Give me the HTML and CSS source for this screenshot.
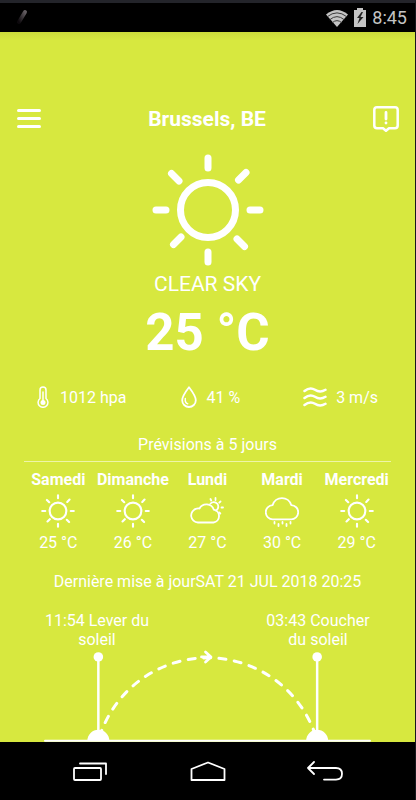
FILE: index.html
```
<!DOCTYPE html>
<html lang="fr">
<head>
    <meta charset="UTF-8">
    <meta name="viewport" content="width=device-width, initial-scale=1">
    <title>Brussels, BE</title>
    <link rel="stylesheet" href="styles.css">
</head>
<body>
    <svg class="symbols" aria-hidden="true">
        <symbol id="sun" viewBox="0 0 112 112">
            <circle cx="56" cy="56" r="27.5"/>
            <path d="M56 4v10M56 98v10M4 56h10M98 56h10M19.5 19.5l7.5 7.5M86.5 26l7.5-7.5M21.5 90.5l7.5-7.5M85 85l7.5 7.5"/>
        </symbol>
    </svg>

    <div class="phone">
        <div class="status-bar">
            <svg class="status-pen" width="14" height="18" viewBox="0 0 14 18">
                <defs>
                    <linearGradient id="fade" x1="1" y1="0" x2="0" y2="1">
                        <stop offset="0" stop-color="#625c60"/>
                        <stop offset="1" stop-color="#0c080c"/>
                    </linearGradient>
                </defs>
                <path d="M10 3L4 13" stroke="url(#fade)" stroke-width="4" stroke-linecap="round"/>
            </svg>
            <div class="status-icons">
                <svg width="22" height="18" viewBox="0 0 22 18">
                    <path d="M0 5.500Q11-3.500 22 5.500L11 18z" fill="#c4c4c4"/>
                    <path d="M1.500 7.500Q11 0 20.500 7.500M4 10.500Q11 4.500 18 10.500M6.500 13.500Q11 9.500 15.500 13.500" fill="none" stroke="#3a3a3a" stroke-width="1"/>
                </svg>
                <svg width="12" height="19" viewBox="0 0 12 19">
                    <path d="M3 0h6v2h3v17H0V2h3z" fill="#c4c4c4"/>
                    <path d="M7.500 4L3 10h2.500L3.500 16 9.500 9H6.500L9 4z" fill="#222"/>
                </svg>
                <span class="clock">8:45</span>
            </div>
        </div>

        <main class="weather">
            <header class="top">
                <button type="button" class="icon-btn" aria-label="Menu">
                    <svg width="24" height="20" viewBox="0 0 24 20">
                        <path d="M1.500 1.500h21M1.500 9.500h21M1.500 17.500h21" stroke-width="3"/>
                    </svg>
                </button>
                <h1>Brussels, BE</h1>
                <button type="button" class="icon-btn" aria-label="Alertes">
                    <svg width="26" height="26" viewBox="0 0 26 26">
                        <path d="M4 1.300h18q2.700 0 2.700 2.700v15.500q0 2.700-2.700 2.700h-6l-3 2.600-3-2.600H4q-2.700 0-2.700-2.700V4q0-2.700 2.700-2.700z" stroke-width="2.500"/>
                        <path d="M13 6.500v6.500M13 16.800v.2" stroke-width="2.800"/>
                    </svg>
                </button>
            </header>

            <section class="current">
                <svg class="sun-big" width="112" height="112"><use href="#sun"/></svg>
                <p class="sky">CLEAR SKY</p>
                <p class="temp">25 °C</p>
            </section>

            <ul class="details">
                <li>
                    <svg width="12" height="22" viewBox="0 0 12 22">
                        <path d="M3 12.500V4q0-3 3-3t3 3v8.500a4.900 4.900 0 1 1-6 0z" stroke-width="1.500"/>
                        <path d="M6 6v9" stroke-width="1.500"/>
                        <circle class="filled" cx="6" cy="16.400" r="2.500"/>
                    </svg>
                    1012 hpa
                </li>
                <li class="humidity">
                    <svg width="16" height="22" viewBox="0 0 16 22">
                        <path d="M8 1.200Q1.200 10 1.200 14.200a6.800 6.800 0 0 0 13.600 0Q14.800 10 8 1.200z" stroke-width="1.800"/>
                        <path d="M4.300 12.500q-.6 4.200 2.500 5.300" stroke-width="1.400"/>
                    </svg>
                    41 %
                </li>
                <li class="wind">
                    <svg width="24" height="20" viewBox="0 0 24 20">
                        <path d="M1.500 4q5.500-4.500 10.500-1.200t10.500 0M1.500 11q5.500-4.500 10.500-1.200t10.500 0M1.500 18q5.500-4.500 10.500-1.200t10.500 0" stroke-width="2.500"/>
                    </svg>
                    3 m/s
                </li>
            </ul>

            <section class="forecast">
                <h2>Prévisions à 5 jours</h2>
                <ol class="days">
                    <li>
                        <b>Samedi</b>
                        <svg class="day-icon" width="34" height="34"><use href="#sun"/></svg>
                        <span>25 °C</span>
                    </li>
                    <li>
                        <b>Dimanche</b>
                        <svg class="day-icon" width="34" height="34"><use href="#sun"/></svg>
                        <span>26 °C</span>
                    </li>
                    <li>
                        <b>Lundi</b>
                        <svg width="34" height="34" viewBox="0 0 34 34">
                            <path d="M8 28.500a7 7 0 0 1-1.500-13.800q1.500-.5 3-.2a7.800 7.800 0 0 1 14.300 1.200 6.500 6.500 0 0 1-.3 12.800z"/>
                            <path d="M20.500 9.500a4.500 4.500 0 1 1 5.500 7M25.500 4V6M30.500 7.500L29.300 8.700M31.500 13.500h1.500M29.300 18.500l1 1M20.500 5l.7 1.500"/>
                        </svg>
                        <span>27 °C</span>
                    </li>
                    <li>
                        <b>Mardi</b>
                        <svg width="34" height="34" viewBox="0 0 34 34">
                            <path d="M8 25.300a7.100 7.100 0 0 1-.3-14.200 9.600 9.600 0 0 1 18.500 0 7.100 7.100 0 0 1-.2 14.200z"/>
                            <path d="M9.500 28v1.500M13.500 30v2M17.500 28v1.500M21.500 30v2M25.500 28v1.500"/>
                        </svg>
                        <span>30 °C</span>
                    </li>
                    <li>
                        <b>Mercredi</b>
                        <svg class="day-icon" width="34" height="34"><use href="#sun"/></svg>
                        <span>29 °C</span>
                    </li>
                </ol>
                <p class="updated">Dernière mise à jourSAT 21 JUL 2018 20:25</p>
            </section>

            <section class="daylight">
                <div class="daylight-labels">
                    <p>11:54 Lever du soleil</p>
                    <p>03:43 Coucher du soleil</p>
                </div>
                <svg class="arc" viewBox="0 0 328 93">
                    <path d="M54.500 8v76M274 8v76" stroke-width="2.500"/>
                    <circle class="filled" cx="54.500" cy="8" r="4.800"/>
                    <circle class="filled" cx="274" cy="8" r="4.800"/>
                    <path d="M54.500 92a114 114 0 0 1 219.500 0" stroke-width="3" stroke-dasharray="7 8.500" stroke-dashoffset="-4"/>
                    <path d="M158 8h9M162 3l5.500 5-5.500 5" stroke-width="2.800"/>
                    <path class="filled" d="M43.500 92a11 11 0 0 1 22 0zM263 92a11 11 0 0 1 22 0z"/>
                    <path d="M1 92h326" stroke-width="2"/>
                </svg>
            </section>
        </main>

        <nav class="nav-bar">
            <button type="button" class="icon-btn" aria-label="Applications récentes">
                <svg width="36" height="22" viewBox="0 0 36 22">
                    <rect x="2" y="8" width="27" height="12" rx="1"/>
                    <path d="M8 3.500h26V14"/>
                </svg>
            </button>
            <button type="button" class="icon-btn" aria-label="Accueil">
                <svg width="36" height="22" viewBox="0 0 36 22">
                    <path d="M1.500 20V9L18 2.500 34.500 9v11z"/>
                </svg>
            </button>
            <button type="button" class="icon-btn" aria-label="Retour">
                <svg width="36" height="22" viewBox="0 0 36 22">
                    <path d="M7 2L1 8l6 6M1 8h28q6 0 6 5.800t-6 5.800H17"/>
                </svg>
            </button>
        </nav>
    </div>
</body>
</html>
```

FILE: styles.css
```
* {
    box-sizing: border-box;
    margin: 0;
    padding: 0;
}

body {
    background: #000;
    color: #fff;
    font-family: Roboto, sans-serif;
    font-size: 16px;
    line-height: 19px;
}

ul, ol {
    list-style: none;
}

svg {
    display: block;
    flex: none;
    fill: none;
    stroke: #fff;
    stroke-linecap: round;
    stroke-linejoin: round;
}

.symbols {
    position: absolute;
    width: 0;
    height: 0;
}

.filled {
    fill: #fff;
    stroke: none;
}

.icon-btn {
    border: none;
    background: none;
    color: inherit;
    cursor: pointer;
}

.phone {
    display: flex;
    flex-direction: column;
    min-height: 100vh;
    border-top: 3px solid #23242a;
    border-right: 1px solid #16171c;
}

/* status bar */
.status-bar {
    display: flex;
    justify-content: space-between;
    align-items: center;
    height: 29px;
    padding: 0 8px 0 15px;
}

.status-bar svg {
    stroke: none;
}

.status-icons {
    display: flex;
    align-items: center;
    gap: 6px;
}

.clock {
    color: #c4c4c4;
    font-size: 18px;
    line-height: 29px;
}

/* weather screen */
.weather {
    flex: 1;
    display: flex;
    flex-direction: column;
    padding-top: 72px;
    background: linear-gradient(#cddc3b, #d7e83f 8px);
}

.top {
    display: flex;
    justify-content: space-between;
    align-items: center;
    height: 30px;
    padding: 0 16px 0 17px;
}

.top h1 {
    font-size: 21px;
    line-height: 30px;
}

.current {
    display: flex;
    flex-direction: column;
    align-items: center;
    padding-top: 20px;
}

.sun-big {
    stroke-width: 7;
}

.sky {
    padding-top: 2px;
    font-size: 21px;
    line-height: 32px;
}

.temp {
    font-size: 51px;
    font-weight: bold;
    line-height: 66px;
}

.details {
    display: flex;
    justify-content: space-between;
    padding: 20px 37px 0;
}

.details li {
    display: flex;
    align-items: center;
    gap: 11px;
    height: 22px;
}

.details .humidity {
    gap: 9px;
    padding-right: 8px;
}

.details .wind {
    gap: 9px;
}

.forecast {
    padding-top: 24px;
    text-align: center;
}

.forecast h2 {
    margin: 0 24px;
    padding: 3px 0 7px;
    border-bottom: 1px solid #eef5a8;
    font-size: 16px;
    font-weight: normal;
}

.days {
    display: grid;
    grid-template-columns: repeat(5, 1fr);
    padding: 8px 21px 0;
}

.days li {
    display: flex;
    flex-direction: column;
    align-items: center;
    gap: 5px;
}

.days svg {
    stroke-width: 1.8;
}

.days .day-icon {
    stroke-width: 7;
}

.updated {
    padding-top: 20px;
}

/* sunrise / sunset */
.daylight {
    padding: 20px 44px 0;
}

.daylight-labels {
    display: flex;
    justify-content: space-between;
    margin: 0 -4px;
    text-align: center;
}

.daylight-labels p {
    width: 114px;
}

.arc {
    width: 100%;
    height: auto;
}

/* android navigation */
.nav-bar {
    display: flex;
    justify-content: space-between;
    align-items: center;
    height: 58px;
    padding: 0 72px;
}

.nav-bar svg {
    stroke-width: 1.8;
}
```
